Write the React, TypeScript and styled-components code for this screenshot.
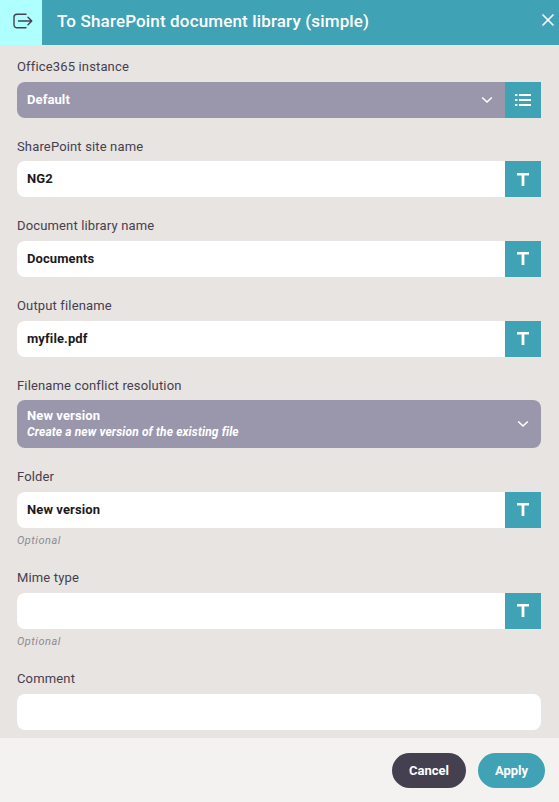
import React from "react";
import styled, { createGlobalStyle } from "styled-components";

const GlobalStyle = createGlobalStyle`
  html, body {
    margin: 0;
    padding: 0;
    height: 100%;
    overflow: hidden;
  }
  body {
    font-family: Roboto, "Liberation Sans", sans-serif;
    background-color: #e8e4e1;
  }
`;

const ExitIcon = () => (
  <svg width="20" height="16" viewBox="0 0 20 16" fill="none" stroke="#454050" strokeWidth="1.4" strokeLinecap="round" strokeLinejoin="round">
    <path d="M13 1.2H4a3 3 0 0 0-3 3v7.6a3 3 0 0 0 3 3h9" />
    <path d="M5.5 8h13.3M15 4.3L18.8 8 15 11.7" />
  </svg>
);

const CloseIcon = () => (
  <svg width="14" height="14" viewBox="0 0 14 14" fill="none" stroke="#fff" strokeWidth="1.6">
    <path d="M1.5 1.5l11 11M12.5 1.5l-11 11" />
  </svg>
);

const ChevronIcon = () => (
  <svg width="12" height="8" viewBox="0 0 12 8" fill="none" stroke="#fff" strokeWidth="1.6">
    <path d="M1.2 1.5L6 6l4.8-4.5" />
  </svg>
);

const ListIcon = () => (
  <svg width="16" height="12" viewBox="0 0 16 12" fill="none" stroke="#fff" strokeWidth="2">
    <path d="M4 1h12M4 6h12M4 11h12" />
    <path d="M0 1h2.4M0 6h2.4M0 11h2.4" />
  </svg>
);

const TextIcon = () => (
  <svg width="12" height="13" viewBox="0 0 12 13" fill="#fff">
    <path d="M0 0h12v2.4H7.4V13H4.6V2.4H0z" />
  </svg>
);

type FieldProps = {
  label: string;
  value?: string;
  hint?: string;
  noAction?: boolean;
};

const TextField = ({ label, value, hint, noAction }: FieldProps) => (
  <Field>
    <Label>{label}</Label>
    <Control>
      <Input $rounded={noAction}>{value}</Input>
      {!noAction && (
        <ActionButton>
          <TextIcon />
        </ActionButton>
      )}
    </Control>
    {hint && <Hint>{hint}</Hint>}
  </Field>
);

const App: React.FC = () => {
  return (
    <Page>
      <GlobalStyle />
      <Header>
        <IconBox>
          <ExitIcon />
        </IconBox>
        <Title>To SharePoint document library (simple)</Title>
        <CloseButton>
          <CloseIcon />
        </CloseButton>
      </Header>
      <Content>
        <Field>
          <Label>Office365 instance</Label>
          <Control>
            <Select $attached>
              <SelectText>
                <SelectValue>Default</SelectValue>
              </SelectText>
              <ChevronIcon />
            </Select>
            <ActionButton>
              <ListIcon />
            </ActionButton>
          </Control>
        </Field>
        <TextField label="SharePoint site name" value="NG2" />
        <TextField label="Document library name" value="Documents" />
        <TextField label="Output filename" value="myfile.pdf" />
        <Field>
          <Label>Filename conflict resolution</Label>
          <Control>
            <Select $tall>
              <SelectText $tall>
                <SelectValue>New version</SelectValue>
                <SelectNote>Create a new version of the existing file</SelectNote>
              </SelectText>
              <ChevronIcon />
            </Select>
          </Control>
        </Field>
        <TextField label="Folder" value="New version" hint="Optional" />
        <TextField label="Mime type" hint="Optional" />
        <TextField label="Comment" hint="Optional" noAction />
      </Content>
      <Footer>
        <FooterButton $variant="cancel">Cancel</FooterButton>
        <FooterButton $variant="apply">Apply</FooterButton>
      </Footer>
    </Page>
  );
};

export default App;

const Page = styled.div`
  display: flex;
  flex-direction: column;
  height: 100vh;
  background-color: #e8e4e1;
`;

const Header = styled.div`
  display: flex;
  align-items: center;
  flex-shrink: 0;
  height: 45px;
  background-color: #3fa2b5;
`;

const IconBox = styled.div`
  display: flex;
  align-items: center;
  justify-content: center;
  box-sizing: border-box;
  width: 42px;
  height: 100%;
  padding: 0 4px 3px 8px;
  background-color: #b0ffff;
`;

const Title = styled.h1`
  flex: 1;
  margin: 0 0 4px 15px;
  font-size: 17px;
  font-weight: 500;
  letter-spacing: 0.15px;
  color: #fff;
`;

const CloseButton = styled.div`
  display: flex;
  margin: 0 4px 5px 0;
`;

const Content = styled.div`
  flex: 1;
  min-height: 0;
  overflow: hidden;
  padding: 13px 18px 0 17px;
`;

const Field = styled.div`
  margin-bottom: 20px;
`;

const Label = styled.div`
  height: 18.88px;
  margin-bottom: 4.78px;
  font-size: 13px;
  line-height: 18.88px;
  letter-spacing: 0.15px;
  color: #454050;
`;

const Control = styled.div`
  display: flex;
`;

const Input = styled.div<{ $rounded?: boolean }>`
  flex: 1;
  box-sizing: border-box;
  height: 36px;
  padding: 0 10px;
  font-size: 13px;
  font-weight: 700;
  line-height: 36px;
  letter-spacing: 0.1px;
  color: #1b1a1f;
  background-color: #fff;
  border-radius: ${({ $rounded }) => ($rounded ? "8px" : "8px 0 0 8px")};
`;

const ActionButton = styled.div`
  display: flex;
  align-items: center;
  justify-content: center;
  width: 36px;
  height: 36px;
  background-color: #3fa2b5;
`;

const Select = styled.div<{ $attached?: boolean; $tall?: boolean }>`
  flex: 1;
  display: flex;
  align-items: center;
  justify-content: space-between;
  box-sizing: border-box;
  height: ${({ $tall }) => ($tall ? "48px" : "36px")};
  padding: 0 12px 0 10px;
  background-color: #9a97ac;
  border-radius: ${({ $attached }) => ($attached ? "8px 0 0 8px" : "8px")};
`;

const SelectText = styled.div<{ $tall?: boolean }>`
  padding-top: ${({ $tall }) => ($tall ? "1px" : "0")};
  color: #fff;
  font-weight: 700;
`;

const SelectValue = styled.div`
  font-size: 13px;
  line-height: 16px;
  letter-spacing: 0.1px;
`;

const SelectNote = styled.div`
  font-size: 12px;
  font-style: italic;
  line-height: 17px;
  letter-spacing: 0.12px;
`;

const Hint = styled.div`
  height: 21.33px;
  padding-top: 5px;
  box-sizing: border-box;
  font-size: 11px;
  font-style: italic;
  line-height: 16px;
  letter-spacing: 0.5px;
  color: #8f8b93;
`;

const Footer = styled.div`
  display: flex;
  justify-content: flex-end;
  align-items: center;
  gap: 12px;
  flex-shrink: 0;
  height: 64px;
  padding-right: 14px;
  background-color: #f4f2f0;
`;

const FooterButton = styled.div<{ $variant: "cancel" | "apply" }>`
  display: flex;
  align-items: center;
  justify-content: center;
  height: 35px;
  width: ${({ $variant }) => ($variant === "cancel" ? "74px" : "67px")};
  border-radius: 18px;
  font-size: 13px;
  font-weight: 700;
  color: #fff;
  background-color: ${({ $variant }) => ($variant === "cancel" ? "#454050" : "#3fa2b5")};
`;
